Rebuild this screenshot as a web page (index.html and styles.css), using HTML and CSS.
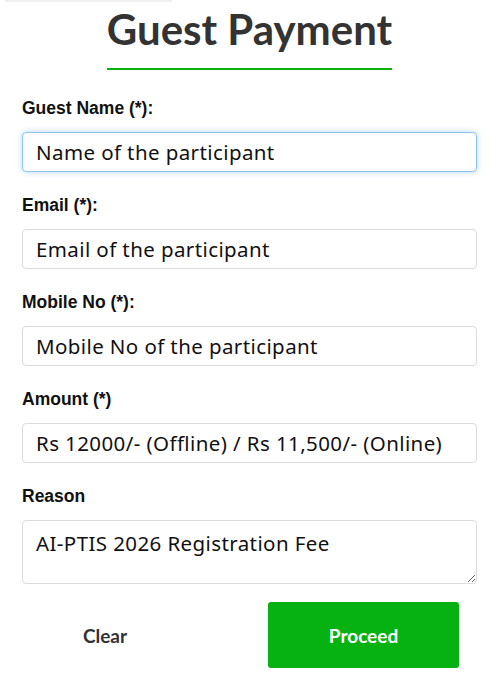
FILE: index.html
```html
<!DOCTYPE html>
<html lang="en">
<head>
    <meta charset="UTF-8">
    <meta name="viewport" content="width=device-width, initial-scale=1.0">
    <title>Guest Payment</title>
    <link rel="stylesheet" href="styles.css">
</head>
<body>
    <div class="top-edge"></div>
    <div class="payment-container">
        <div class="title-wrap">
            <h2 class="title">Guest Payment</h2>
        </div>
        <form id="paymentForm">
            <div class="form-group">
                <label for="guestName">Guest Name (*):</label>
                <input type="text" id="guestName" class="focused" value="Name of the participant">
            </div>
            <div class="form-group">
                <label for="email">Email (*):</label>
                <input type="text" id="email" value="Email of the participant">
            </div>
            <div class="form-group">
                <label for="mobile">Mobile No (*):</label>
                <input type="text" id="mobile" value="Mobile No of the participant">
            </div>
            <div class="form-group">
                <label for="amount">Amount (*)</label>
                <input type="text" id="amount" value="Rs 12000/- (Offline) / Rs 11,500/- (Online)">
            </div>
            <div class="form-group form-group-last">
                <label for="reason">Reason</label>
                <textarea id="reason">AI-PTIS 2026 Registration Fee</textarea>
            </div>
            <div class="actions">
                <button type="reset" class="btn-clear">Clear</button>
                <button type="submit" class="btn-proceed">Proceed</button>
            </div>
        </form>
    </div>
</body>
</html>
```

FILE: styles.css
```css
body {
    margin: 0;
    padding: 0;
    background: #fff;
    font-family: "Liberation Sans", Arial, sans-serif;
}
.top-edge {
    width: 167px;
    height: 2px;
    margin-left: 5px;
    background: #f0f0f0;
}
.payment-container {
    width: 455px;
    margin-left: 22px;
}
.title-wrap {
    text-align: center;
}
.title {
    display: inline-block;
    margin: 3px 0 0;
    padding-bottom: 15px;
    font-family: Lato, sans-serif;
    font-weight: bold;
    font-size: 42px;
    line-height: 48px;
    color: #333;
    border-bottom: 2px solid #0ab20f;
}
form {
    margin-top: 28px;
}
.form-group {
    margin-bottom: 23px;
}
.form-group label {
    display: block;
    margin-bottom: 14px;
    font-weight: bold;
    font-size: 17.5px;
    line-height: 20px;
    color: #111;
}
.form-group input,
.form-group textarea {
    display: block;
    box-sizing: border-box;
    width: 100%;
    margin: 0;
    padding: 0 13px;
    border: 1px solid #dcdcdc;
    border-radius: 4px;
    font-family: "Noto Sans", sans-serif;
    font-size: 20.5px;
    letter-spacing: 0.4px;
    color: #111;
    outline: none;
}
.form-group input {
    height: 40px;
}
.form-group input.focused {
    border-color: #8cc4f2;
    box-shadow: 0 0 6px rgba(100, 170, 240, 0.45);
}
.form-group textarea {
    height: 64px;
    padding-top: 9px;
    line-height: 26px;
    resize: vertical;
}
.form-group-last {
    margin-bottom: 18px;
}
.actions {
    display: flex;
    align-items: center;
}
.actions button {
    height: 66px;
    border: none;
    border-radius: 3px;
    font-family: Lato, sans-serif;
    font-weight: bold;
    font-size: 19px;
    cursor: pointer;
}
.btn-clear {
    width: 166px;
    background: transparent;
    color: #333;
}
.btn-proceed {
    width: 191px;
    margin-left: auto;
    margin-right: 18px;
    background: #05b211;
    color: #fff;
}
```
